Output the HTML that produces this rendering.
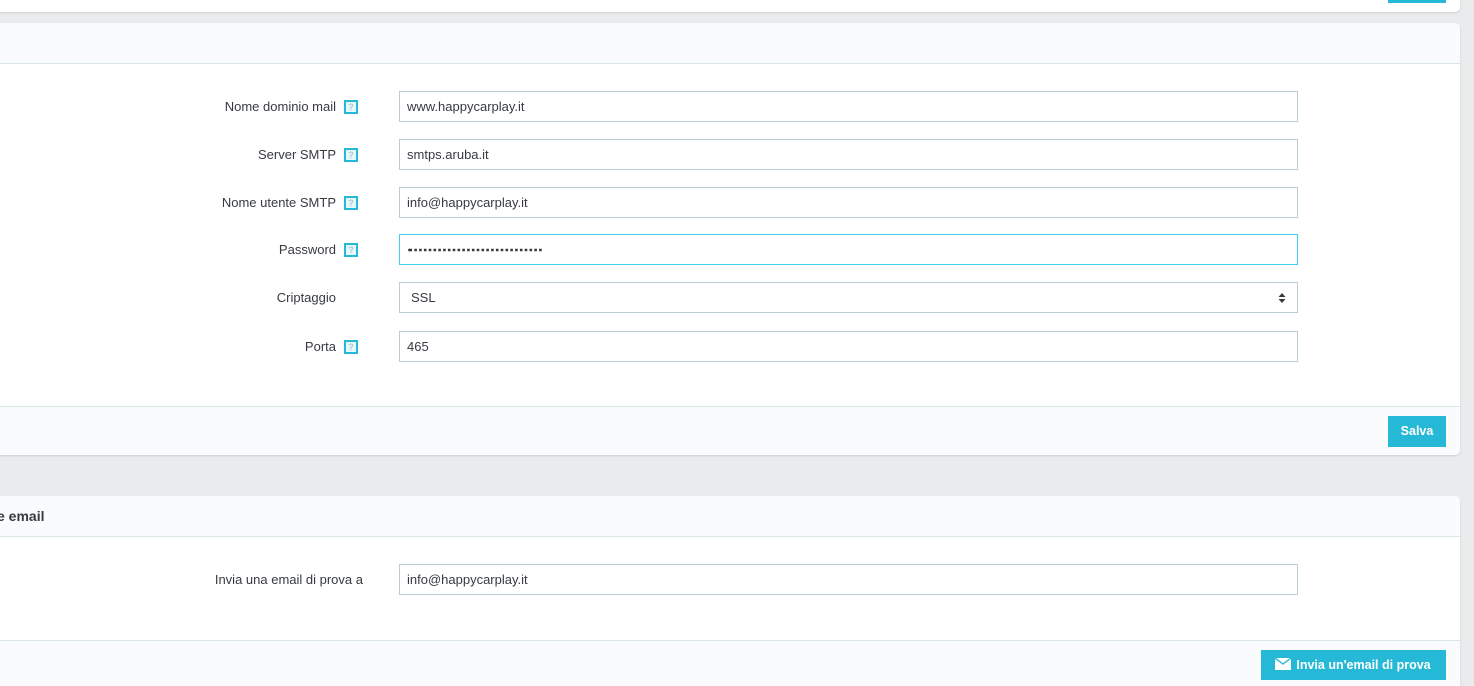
<!DOCTYPE html>
<html><head><meta charset="utf-8"><style>
*{box-sizing:border-box;margin:0;padding:0}
html,body{width:1474px;height:686px;overflow:hidden}
body{background:#eaebec;font-family:"Liberation Sans",sans-serif;font-size:13px;color:#363a41;position:relative}
.panel{position:absolute;left:-10px;width:1470px;background:#fff;border-radius:5px;box-shadow:0 1px 2px rgba(0,0,0,.12)}
.hd{height:41px;background:#fafbfc;border-bottom:1px solid #dbe6e9;border-radius:5px 5px 0 0;font-weight:bold;font-size:14px;line-height:41px;color:#363a41}
.ft{position:absolute;left:0;right:0;background:#fafbfc;border-top:1px solid #dbe6e9;border-radius:0 0 5px 5px}
.row{position:absolute;left:0;width:1470px;height:31px}
.lbl{position:absolute;right:1124px;top:0;line-height:31px;text-align:right;white-space:nowrap}
.q{position:absolute;left:354px;top:9px;width:14px;height:14px;border:2px solid #25b9d7;background:#e9f6f9;color:#9bcfdb;font-size:9px;line-height:10px;text-align:center;font-weight:bold}
.inp{position:absolute;left:409px;top:0;width:899px;height:31px;border:1px solid #bbcdd2;padding-left:7px;line-height:29px}
.btn{position:absolute;background:#25b9d7;color:#fff;font-weight:bold;font-size:12.5px;text-align:center}
</style></head><body>
<div class="panel" style="top:-20px;height:32px"></div>
<div class="btn" style="left:1388px;top:0;width:58px;height:3px"></div>

<div class="panel" style="top:23px;height:432px">
<div class="hd"></div>
<div class="row" style="top:68px"><span class="lbl">Nome dominio mail</span><span class="q">?</span><div class="inp">www.happycarplay.it</div></div>
<div class="row" style="top:116px"><span class="lbl">Server SMTP</span><span class="q">?</span><div class="inp">smtps.aruba.it</div></div>
<div class="row" style="top:164px"><span class="lbl">Nome utente SMTP</span><span class="q">?</span><div class="inp">info@happycarplay.it</div></div>
<div class="row" style="top:211px"><span class="lbl">Password</span><span class="q">?</span><div class="inp" style="border-color:#3ed2f0;padding-left:8px"><svg width="140" height="29" style="display:block"><g fill="#363a41"><circle cx="1.5" cy="15" r="1.4"/></g><line x1="1.5" y1="15" x2="135" y2="15" stroke="#363a41" stroke-width="2.6" stroke-dasharray="2.6 2.2"/></svg></div></div>
<div class="row" style="top:259px"><span class="lbl">Criptaggio</span><div class="inp" style="padding-left:11px">SSL</div></div>
<div class="row" style="top:308px"><span class="lbl">Porta</span><span class="q">?</span><div class="inp">465</div></div>
<div class="ft" style="top:383px;height:49px"></div>
</div>
<svg width="8" height="10" viewBox="0 0 8 10" style="position:absolute;left:1278px;top:293px"><path d="M4 0L7.5 4H0.5Z M4 10L7.5 6H0.5Z" fill="#363a41"/></svg>
<div class="btn" style="left:1388px;top:416px;width:58px;height:31px;line-height:31px">Salva</div>

<div class="panel" style="top:496px;height:200px">
<div class="hd" style="padding-left:7px">e email</div>
<div class="row" style="top:68px"><span class="lbl" style="right:1097px">Invia una email di prova a</span><div class="inp">info@happycarplay.it</div></div>
<div class="ft" style="top:144px;height:60px"></div>
</div>
<div class="btn" style="left:1261px;top:650px;width:185px;height:30px;line-height:30px;padding-left:20px">
<svg width="16" height="12" viewBox="0 0 16 12" style="position:absolute;left:14px;top:8px"><rect width="16" height="12" fill="#fff"/><path d="M0 0 L8 6 L16 0" stroke="#25b9d7" stroke-width="1.3" fill="none"/></svg>Invia un'email di prova</div>
</body></html>
